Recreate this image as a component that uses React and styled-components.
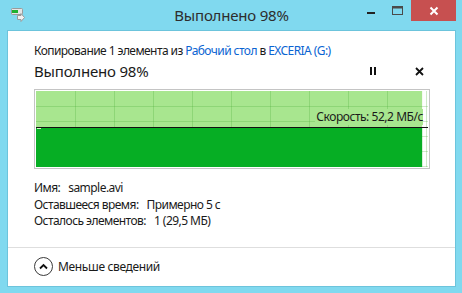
import React from "react";
import styled, { createGlobalStyle } from "styled-components";

const Global = createGlobalStyle`
  html, body { margin: 0; padding: 0; background: #80d9ef; }
  body { font-family: "Noto Sans", "Open Sans", sans-serif; }
  * { box-sizing: border-box; }
`;

const FONT = `"Noto Sans", "Open Sans", sans-serif`;

const Frame = styled.div`
  width: 462px;
  height: 293px;
  background: #80d9ef;
  display: flex;
  flex-direction: column;
  padding: 0 6px 6px 7px;
`;

const TitleBar = styled.div`
  height: 30px;
  flex: none;
  display: grid;
  grid-template-columns: 1fr auto 1fr;
  align-items: start;
`;

const AppIcon = styled.div`
  padding: 6px 0 0 3px;
  display: flex;
`;

const Title = styled.div`
  font-family: ${FONT};
  font-size: 15px;
  line-height: 20px;
  padding-top: 5px;
  color: #2d2d2d;
  letter-spacing: -0.2px;
`;

const WinButtons = styled.div`
  display: flex;
  justify-content: flex-end;
`;

const WinBtn = styled.div`
  width: ${(p) => p.$w}px;
  height: 21px;
  display: flex;
  align-items: center;
  justify-content: center;
  background: ${(p) => (p.$close ? "#c75050" : "transparent")};
`;

const Panel = styled.div`
  flex: 1;
  background: #ffffff;
  border: 1px solid #6cc4dc;
  display: flex;
  flex-direction: column;
`;

const Top = styled.div`
  padding: 12px 26px 0 26px;
  display: flex;
  flex-direction: column;
`;

const CopyLine = styled.div`
  font-family: ${FONT};
  font-size: 12px;
  line-height: 16px;
  color: #1a1a1a;
  letter-spacing: -0.57px;
  white-space: nowrap;
`;

const Link = styled.span`
  color: #0a64d2;
`;

const HeadRow = styled.div`
  height: 22px;
  display: flex;
  align-items: center;
  margin-top: 1px;
`;

const Heading = styled.div`
  flex: 1;
  font-family: ${FONT};
  font-size: 15px;
  line-height: 22px;
  color: #1a1a1a;
  letter-spacing: -0.2px;
`;

const CtrlBtn = styled.div`
  width: ${(p) => p.$w}px;
  margin-right: ${(p) => p.$mr || 0}px;
  height: 22px;
  display: flex;
  align-items: center;
  justify-content: center;
`;

const ChartBox = styled.div`
  margin-top: 7px;
  width: 396px;
  height: 80px;
  border: 1px solid #c4c4c4;
  padding: 1px;
  background: #fff;
  position: relative;
`;

const SpeedLabel = styled.div`
  position: absolute;
  right: 6px;
  top: 19px;
  font-family: ${FONT};
  font-size: 12px;
  line-height: 16px;
  color: #1a1a1a;
  background: #a8e68f;
  letter-spacing: -0.45px;
  padding-left: 1px;
`;

const Details = styled.div`
  margin-top: 11px;
  display: flex;
  flex-direction: column;
`;

const DetailRow = styled.div`
  display: flex;
  gap: 8px;
  font-family: ${FONT};
  font-size: 12px;
  line-height: 16.5px;
  color: #1a1a1a;
  letter-spacing: -0.55px;
  white-space: nowrap;
`;

const DetailLabel = styled.span``;
const DetailValue = styled.span``;

const Separator = styled.div`
  margin-top: 17px;
  height: 1px;
  background: #dedede;
`;

const Footer = styled.div`
  flex: 1;
  display: flex;
  align-items: center;
  padding: 0 26px 0 26px;
  gap: 5px;
`;

const Circle = styled.div`
  width: 19px;
  height: 19px;
  border-radius: 50%;
  border: 1.3px solid #3a3a3a;
  display: flex;
  align-items: center;
  justify-content: center;
`;

const FooterText = styled.div`
  font-family: ${FONT};
  font-size: 12px;
  color: #1a1a1a;
  letter-spacing: -0.35px;
`;

const W = 392;
const H = 76;
const FILL = 0.985;
const LINE_Y = 36;

function Chart() {
  const fillW = W * FILL;
  const vlines = [];
  for (let x = 39; x < W; x += 39) vlines.push(x);
  const hlines = [];
  for (let y = 15; y < H; y += 15) hlines.push(y);
  return (
    <svg width={W} height={H} style={{ display: "block" }}>
      <rect x="0" y="0" width={W} height={H} fill="#ffffff" />
      <rect x="0" y="0" width={fillW} height={H} fill="#a8e68f" />
      {vlines.map((x) => (
        <line key={"v" + x} x1={x + 0.5} y1="0" x2={x + 0.5} y2={H} stroke="rgba(70,170,50,0.26)" />
      ))}
      {hlines.map((y) => (
        <line key={"h" + y} x1="0" y1={y + 0.5} x2={W} y2={y + 0.5} stroke="rgba(70,170,50,0.26)" />
      ))}
      <rect x="0" y={LINE_Y + 1} width={fillW} height={H - LINE_Y - 1} fill="#06ae24" />
      <line x1="0" y1={LINE_Y + 0.5} x2={W} y2={LINE_Y + 0.5} stroke="#111" />
      <rect x="1" y={LINE_Y + 1} width="4" height="1" fill="#d8f0cc" />
    </svg>
  );
}

function CopyIcon() {
  return (
    <svg width="16" height="16" viewBox="0 0 16 16">
      <rect x="1.5" y="2.5" width="11" height="6" rx="1" fill="#e6e6e6" stroke="#9a9a9a" />
      <rect x="2" y="4" width="6" height="3" fill="#1fb12f" />
      <path d="M7.5 9.5 H11 V7.5 L14.5 11.5 L11 15.5 V13.5 H7.5 Z" fill="#f2f2f2" stroke="#9a9a9a" />
    </svg>
  );
}

const details = [
  ["Имя:", "sample.avi"],
  ["Оставшееся время:", "Примерно 5 с"],
  ["Осталось элементов:", "1 (29,5 МБ)"],
];

export default function App() {
  return (
    <>
      <Global />
      <Frame>
        <TitleBar>
          <AppIcon>
            <CopyIcon />
          </AppIcon>
          <Title>Выполнено 98%</Title>
          <WinButtons>
            <WinBtn $w={26}>
              <svg width="10" height="10" viewBox="0 0 10 10">
                <rect x="1" y="6" width="8" height="2" fill="#222" />
              </svg>
            </WinBtn>
            <WinBtn $w={27}>
              <svg width="11" height="10" viewBox="0 0 11 10">
                <rect x="0.5" y="0.5" width="10" height="8" fill="none" stroke="#4a4a4a" />
                <rect x="0.5" y="0.5" width="10" height="2" fill="#4a4a4a" />
              </svg>
            </WinBtn>
            <WinBtn $w={45} $close>
              <svg width="10" height="10" viewBox="0 0 10 10">
                <path d="M1.5 1.5 L8.5 8.5 M8.5 1.5 L1.5 8.5" stroke="#fff" strokeWidth="2" />
              </svg>
            </WinBtn>
          </WinButtons>
        </TitleBar>
        <Panel>
          <Top>
            <CopyLine>
              Копирование 1 элемента из <Link>Рабочий стол</Link> в <Link>EXCERIA (G:)</Link>
            </CopyLine>
            <HeadRow>
              <Heading>Выполнено 98%</Heading>
              <CtrlBtn $w={26} $mr={24}>
                <svg width="8" height="8" viewBox="0 0 8 8">
                  <rect x="1" y="0" width="2" height="8" fill="#111" />
                  <rect x="5" y="0" width="2" height="8" fill="#111" />
                </svg>
              </CtrlBtn>
              <CtrlBtn $w={19}>
                <svg width="9" height="9" viewBox="0 0 9 9">
                  <path d="M1 1 L8 8 M8 1 L1 8" stroke="#111" strokeWidth="1.8" />
                </svg>
              </CtrlBtn>
            </HeadRow>
            <ChartBox>
              <Chart />
              <SpeedLabel>Скорость: 52,2 МБ/с</SpeedLabel>
            </ChartBox>
            <Details>
              {details.map(([l, v]) => (
                <DetailRow key={l}>
                  <DetailLabel>{l}</DetailLabel>
                  <DetailValue>{v}</DetailValue>
                </DetailRow>
              ))}
            </Details>
          </Top>
          <Separator />
          <Footer>
            <Circle>
              <svg width="9" height="7" viewBox="0 0 9 7">
                <path d="M1 5.5 L4.5 2 L8 5.5" fill="none" stroke="#111" strokeWidth="1.8" />
              </svg>
            </Circle>
            <FooterText>Меньше сведений</FooterText>
          </Footer>
        </Panel>
      </Frame>
    </>
  );
}
